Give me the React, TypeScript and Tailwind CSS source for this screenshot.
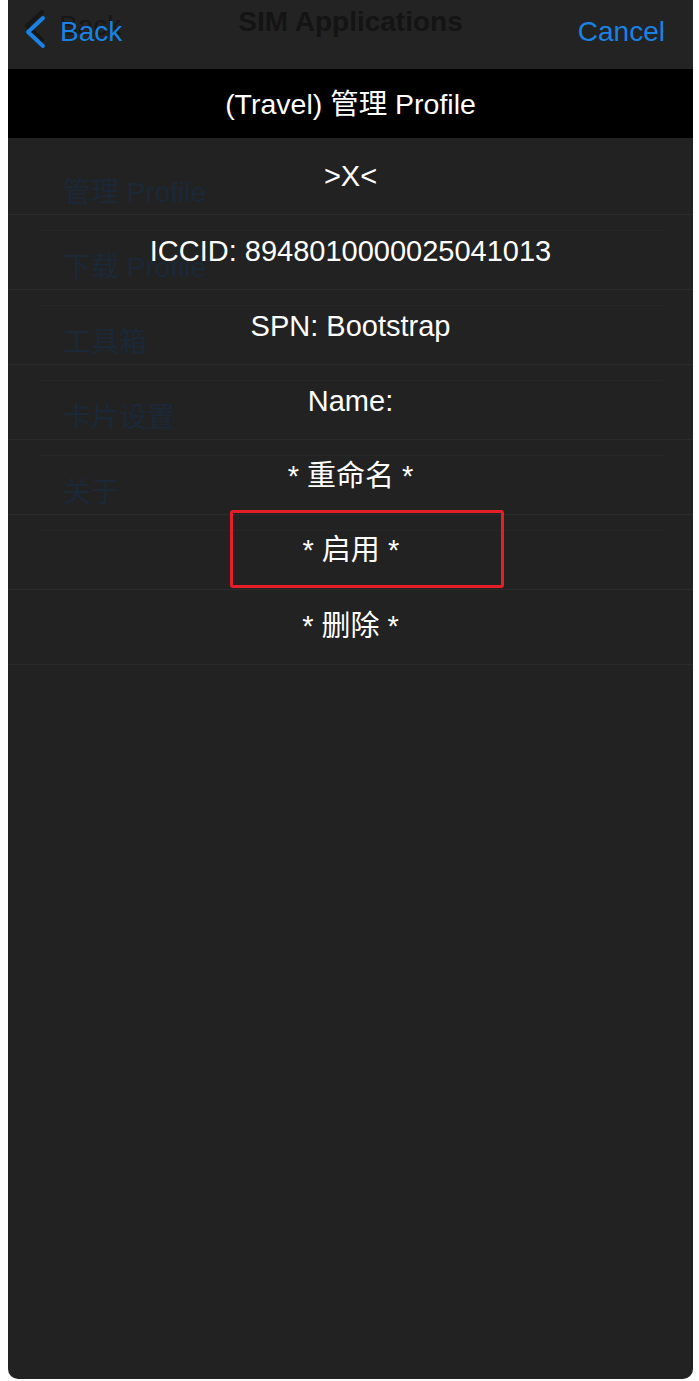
const font = { fontFamily: '"Liberation Sans", "Noto Sans CJK SC", sans-serif' };

const menuRows = ['>X<', 'ICCID: 8948010000025041013', 'SPN: Bootstrap', 'Name:', '* 重命名 *', '* 启用 *', '* 删除 *'];
const ghostRows = ['管理 Profile', '下载 Profile', '工具箱', '卡片设置', '关于'];

function Chevron({ className }: { className?: string }) {
  return (
    <svg width="22" height="34" viewBox="0 0 22 34" className={className} fill="none">
      <path d="M19 3 L4 17 L19 31" stroke="currentColor" strokeWidth="4" strokeLinecap="round" strokeLinejoin="round" />
    </svg>
  );
}

export default function App() {
  return (
    <div className="min-h-screen bg-white" style={font}>
      <div className="ml-[8px] w-[685px] h-[1379px] bg-[#222222] rounded-b-[10px] overflow-hidden flex flex-col">
        {/* nav bar */}
        <div className="h-[69px] bg-[#232323] grid grid-cols-[1fr_auto_1fr] items-start">
          <div className="grid">
            <div className="[grid-area:1/1] flex items-center gap-[14px] pl-[15px] pt-[3px] text-[#171717]">
              <Chevron />
              <span className="text-[28px] leading-[32px]">Back</span>
            </div>
            <div className="[grid-area:1/1] flex items-center gap-[14px] pl-[16px] pt-[15px] text-[#1a82e2]">
              <Chevron />
              <span className="text-[28px] leading-[34px]">Back</span>
            </div>
          </div>
          <div className="pt-[6px] text-[28px] font-bold leading-[32px] text-[#141414]">SIM Applications</div>
          <div className="flex justify-end pr-[28px] pt-[15px]">
            <span className="text-[28px] leading-[34px] text-[#1a82e2]">Cancel</span>
          </div>
        </div>

        {/* title bar */}
        <div className="h-[69px] bg-black flex items-center justify-center pt-[1px]">
          <span className="text-[28.5px] text-white">(Travel) 管理 Profile</span>
        </div>

        {/* content: ghosted list under the menu */}
        <div className="grid">
          <div className="[grid-area:1/1] mx-[30px] pt-[18px]">
            {ghostRows.map((label) => (
              <div key={label} className="h-[75px] flex items-center pl-[25px] border-b border-[#262626]">
                <span className="text-[28px] text-[#1b2838]">{label}</span>
              </div>
            ))}
          </div>
          <div className="[grid-area:1/1] pt-[2px]">
            {menuRows.map((label) => (
              <div key={label} className="h-[75px] flex items-center justify-center border-b border-[#2b2b2b]">
                {label === '* 启用 *' ? (
                  <div className="w-[274px] h-[78px] -mt-[7px] ml-[32px] border-[3px] border-[#e61e28] rounded-[3px] flex items-center pl-[70px] pt-[4px]">
                    <span className="text-[29px] text-white">{label}</span>
                  </div>
                ) : (
                  <span className="text-[29px] text-white">{label}</span>
                )}
              </div>
            ))}
          </div>
        </div>
      </div>
    </div>
  );
}
